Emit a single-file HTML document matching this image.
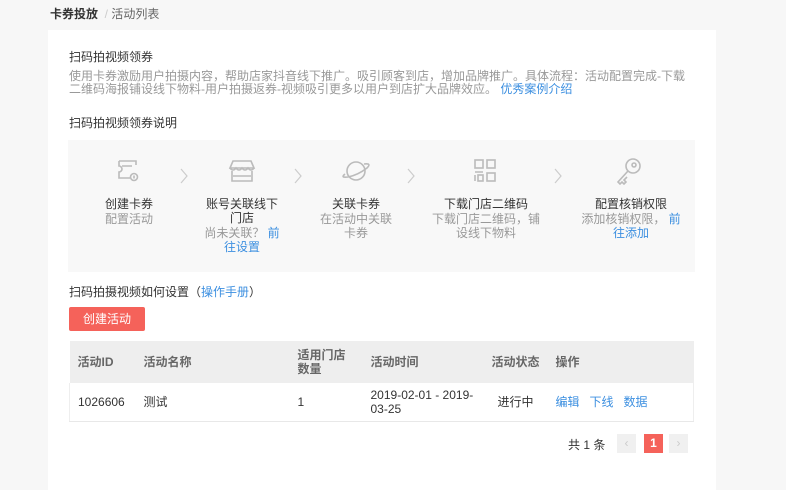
<!DOCTYPE html>
<html><head><meta charset="utf-8"><style>
*{margin:0;padding:0;box-sizing:border-box}
body{width:786px;height:480px;background:#f7f7f7;font-family:"Liberation Sans","Noto Sans CJK SC",sans-serif;font-size:12px;color:#333;position:relative;overflow:hidden}
.a{position:absolute;white-space:nowrap}
.card{position:absolute;left:48px;top:30px;width:668px;height:460px;background:#fff}
.g{color:#999}.b{color:#3c8fe0}
.steps{position:absolute;left:68px;top:140px;width:627px;height:132px;background:#f8f8f8}
.step{position:absolute;top:0;text-align:center;line-height:14px}
.st{color:#333;position:absolute;top:57px;left:0;width:100%}
.ss{color:#999;position:absolute;top:72px;left:0;width:100%}
.chev{position:absolute;top:28px}
table{position:absolute;left:69px;top:341px;width:625px;border-collapse:collapse}
th{background:#eee;color:#666;font-weight:bold;text-align:left;height:42px;padding:0 8px;font-size:12px;line-height:14px}
td{height:38px;padding:0 8px;border-bottom:1px solid #e8e8e8;line-height:14px}
tr td:first-child{border-left:1px solid #eee}tr td:last-child{border-right:1px solid #eee}
.pg{position:absolute;top:434px;width:19px;height:19px;background:#f0f0f0;color:#ccc;text-align:center;line-height:19px}
</style></head><body>
<div class="a" style="left:50px;top:5px;font-weight:bold;color:#333">卡券投放 <span style="color:#ccc;font-weight:normal">&nbsp;/&nbsp;</span><span style="font-weight:normal;color:#666">活动列表</span></div>
<div class="card"></div>
<div class="a" style="left:69px;top:48px">扫码拍视频领券</div>
<div class="a g" style="left:69px;top:70px;line-height:13px">使用卡券激励用户拍摄内容，帮助店家抖音线下推广。吸引顾客到店，增加品牌推广。具体流程：活动配置完成-下载<br>二维码海报铺设线下物料-用户拍摄返券-视频吸引更多以用户到店扩大品牌效应。 <span class="b">优秀案例介绍</span></div>
<div class="a" style="left:69px;top:114px">扫码拍视频领券说明</div>
<div class="steps">
 <svg style="position:absolute;left:48px;top:18px" width="24" height="26" viewBox="0 0 24 26" fill="none" stroke="#bbb" stroke-width="1.6"><path d="M3 3h17v4M3 3v5a3 3 0 0 1 0 6v6h11M6 8h10"/><circle cx="18" cy="19" r="3.5"/><path d="M18 17.5v3"/></svg>
 <svg class="chev" style="left:112px" width="8" height="16" viewBox="0 0 8 16" fill="none" stroke="#ccc" stroke-width="1.2"><path d="M1 1l6 7-6 7"/></svg>
 <svg style="position:absolute;left:160px;top:18px" width="28" height="26" viewBox="0 0 28 26" fill="none" stroke="#bbb" stroke-width="1.6"><path d="M5 3h18l3 7H2z"/><path d="M2 10q3 4 6 0q3 4 6 0q3 4 6 0q3 4 6 0"/><path d="M4 13v10h20V13"/><path d="M5 18h18"/></svg>
 <svg class="chev" style="left:226px" width="8" height="16" viewBox="0 0 8 16" fill="none" stroke="#ccc" stroke-width="1.2"><path d="M1 1l6 7-6 7"/></svg>
 <svg style="position:absolute;left:273px;top:17px" width="30" height="28" viewBox="0 0 30 28" fill="none" stroke="#bbb" stroke-width="1.6"><circle cx="15" cy="14" r="9"/><path d="M4 17q-5 4 3 3q10-2 19-9q5-5-3-4"/></svg>
 <svg class="chev" style="left:339px" width="8" height="16" viewBox="0 0 8 16" fill="none" stroke="#ccc" stroke-width="1.2"><path d="M1 1l6 7-6 7"/></svg>
 <svg style="position:absolute;left:405px;top:18px" width="24" height="26" viewBox="0 0 24 26" fill="none" stroke="#bbb" stroke-width="1.6"><rect x="2" y="2" width="8" height="8"/><rect x="14" y="2" width="8" height="8"/><rect x="14" y="15" width="8" height="8"/><rect x="5" y="17" width="5" height="6"/><path d="M2 14h8M2 17v6"/></svg>
 <svg class="chev" style="left:486px" width="8" height="16" viewBox="0 0 8 16" fill="none" stroke="#ccc" stroke-width="1.2"><path d="M1 1l6 7-6 7"/></svg>
 <svg style="position:absolute;left:546px;top:16px" width="30" height="30" viewBox="0 0 30 30" fill="none" stroke="#bbb" stroke-width="1.6"><circle cx="19" cy="10" r="7"/><circle cx="20" cy="9" r="2"/><path d="M14 15L4 26l2 2 2-2 2 2 2-2-2-2 3-3"/></svg>
 <div class="step" style="left:11px;width:100px"><div class="st">创建卡券</div><div class="ss">配置活动</div></div>
 <div class="step" style="left:128px;width:92px"><div class="st">账号关联线下<br>门店</div><div class="ss" style="top:86px">尚未关联？ <span class="b">前<br>往设置</span></div></div>
 <div class="step" style="left:243px;width:90px"><div class="st">关联卡券</div><div class="ss">在活动中关联<br>卡券</div></div>
 <div class="step" style="left:358px;width:120px"><div class="st">下载门店二维码</div><div class="ss">下载门店二维码，铺<br>设线下物料</div></div>
 <div class="step" style="left:503px;width:120px"><div class="st">配置核销权限</div><div class="ss">添加核销权限， <span class="b">前<br>往添加</span></div></div>
</div>
<div class="a" style="left:69px;top:283px">扫码拍摄视频如何设置（<span class="b">操作手册</span>）</div>
<div class="a" style="left:69px;top:307px;width:76px;height:24px;background:#f5625a;color:#fff;text-align:center;line-height:24px;border-radius:2px">创建活动</div>
<table>
<tr><th style="width:66px">活动ID</th><th style="width:154px">活动名称</th><th style="width:73px">适用门店<br>数量</th><th style="width:121px">活动时间</th><th style="width:64px">活动状态</th><th>操作</th></tr>
<tr><td>1026606</td><td>测试</td><td>1</td><td>2019-02-01 - 2019-<br>03-25</td><td style="text-align:center">进行中</td><td class="b">编辑&nbsp;&nbsp; 下线&nbsp;&nbsp; 数据</td></tr>
</table>
<div class="a" style="left:568px;top:436px">共 1 条</div>
<div class="pg" style="left:617px">‹</div>
<div class="pg" style="left:644px;background:#f5625a;color:#fff;font-weight:bold">1</div>
<div class="pg" style="left:669px">›</div>
</body></html>
